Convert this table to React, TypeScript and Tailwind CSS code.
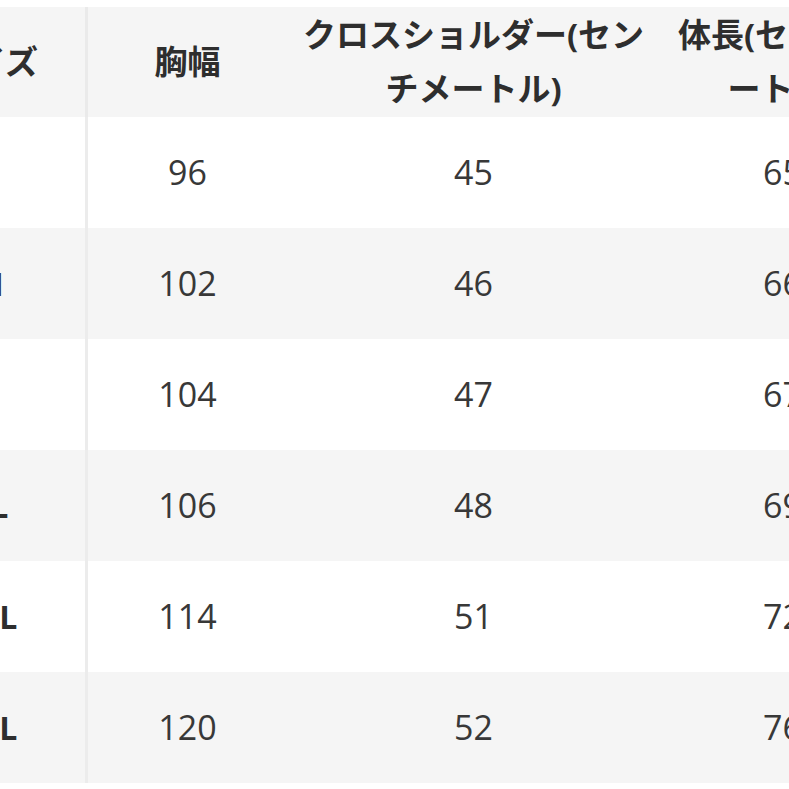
import React from "react";

const rows = [
  ["S", "96", "45", "65"],
  ["M", "102", "46", "66"],
  ["L", "104", "47", "67"],
  ["XL", "106", "48", "69"],
  ["2XL", "114", "51", "72"],
  ["3XL", "120", "52", "76"],
];

const font = { fontFamily: '"Open Sans", "Noto Sans CJK JP", sans-serif' };

export default function App() {
  return (
    <div className="w-[789px] h-[789px] overflow-hidden bg-white pt-[7px]" style={font}>
      <div className="ml-[-107px] w-[1012px]">
        <div className="grid grid-cols-[195px_199px_373px_245px] h-[110px] bg-[#f5f5f5] text-[#2e2e2e] font-bold text-[33px] leading-[54px]">
          <div className="flex items-center justify-center border-r-[3px] border-[#eaeaea]">サイズ</div>
          <div className="flex items-center justify-center">胸幅</div>
          <div className="flex items-center justify-center text-center">
            <span>
              クロスショルダー(セン
              <br />
              チメートル)
            </span>
          </div>
          <div className="flex items-center justify-center text-center">
            <span>
              体長(センチメ
              <br />
              ートル)
            </span>
          </div>
        </div>
        {rows.map((r, i) => (
          <div
            key={i}
            className={
              "grid grid-cols-[195px_199px_373px_245px] h-[111px] text-[34px] text-[#383838] " +
              (i % 2 === 1 ? "bg-[#f5f5f5]" : "bg-white")
            }
          >
            <div className="flex items-center justify-center border-r-[3px] border-[#ececec] font-bold text-[#2e2e2e] text-[32px] pr-[1px]">
              {r[0]}
            </div>
            <div className="flex items-center justify-center">{r[1]}</div>
            <div className="flex items-center justify-center">{r[2]}</div>
            <div className="flex items-center justify-center">{r[3]}</div>
          </div>
        ))}
      </div>
    </div>
  );
}
